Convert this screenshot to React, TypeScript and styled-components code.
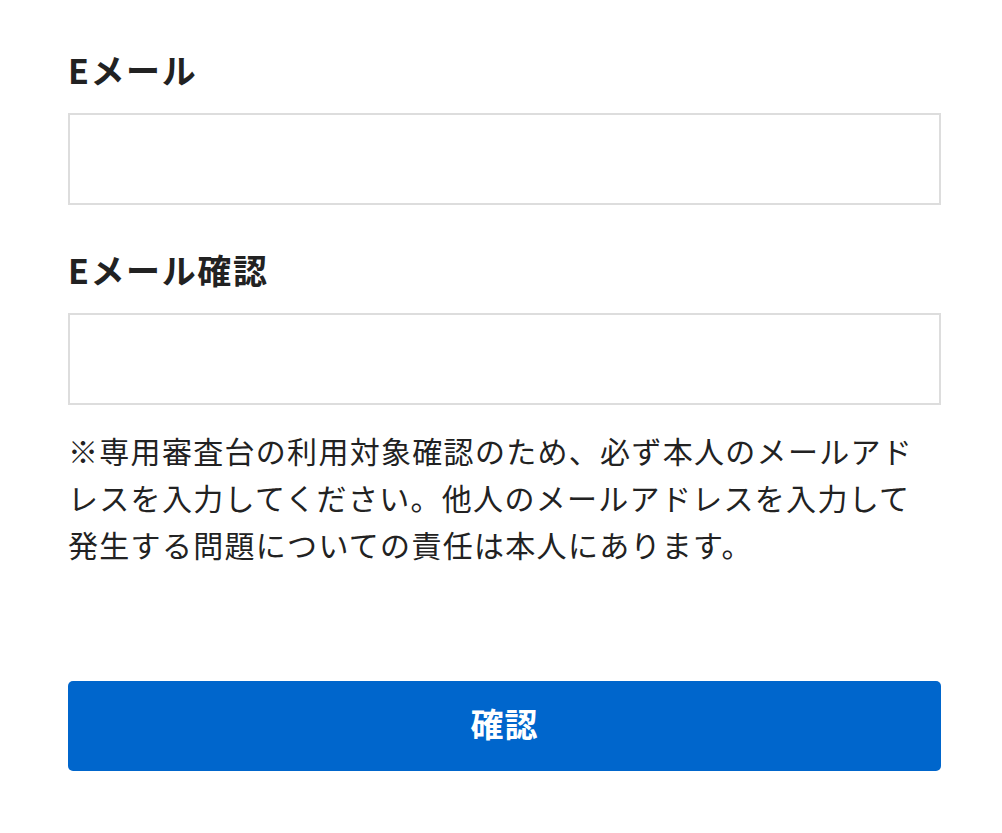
import React, { useState } from 'react';
import styled, { createGlobalStyle } from 'styled-components';

const GlobalStyle = createGlobalStyle`
  html, body {
    margin: 0;
    padding: 0;
    background: #ffffff;
  }
  body {
    font-family: "Noto Sans CJK JP", "Noto Sans", sans-serif;
    color: #222222;
  }
`;

const Form = styled.form`
  width: 873px;
  margin-left: 68px;
  padding-top: 46px;
  display: flex;
  flex-direction: column;
`;

const Field = styled.div<{ $gap?: number }>`
  display: flex;
  flex-direction: column;
  margin-bottom: ${p => p.$gap ?? 0}px;
`;

const Label = styled.label`
  font-size: 34px;
  font-weight: 700;
  line-height: 48px;
  letter-spacing: 1.6px;
  color: #222222;
  margin-bottom: 19px;
`;

const Input = styled.input`
  box-sizing: border-box;
  width: 100%;
  height: 92px;
  border: 2px solid #dddddd;
  border-radius: 0;
  padding: 0 20px;
  font-size: 28px;
  font-family: inherit;
  outline: none;
  background: #ffffff;
`;

const Note = styled.p`
  margin: 22px 0 0;
  font-size: 30px;
  line-height: 47px;
  letter-spacing: 1.3px;
  color: #222222;
`;

const SubmitButton = styled.button`
  margin-top: 113px;
  height: 90px;
  width: 100%;
  padding: 0 0 6px;
  border: none;
  border-radius: 5px;
  background: #0066cc;
  color: #ffffff;
  font-family: inherit;
  font-size: 33px;
  font-weight: 700;
  letter-spacing: 1px;
  cursor: pointer;
`;

const App = () => {
  const [email, setEmail] = useState('');
  const [confirmEmail, setConfirmEmail] = useState('');

  return (
    <>
      <GlobalStyle />
      <Form onSubmit={e => e.preventDefault()}>
        <Field $gap={41}>
          <Label htmlFor="email">Eメール</Label>
          <Input id="email" type="email" value={email} onChange={e => setEmail(e.target.value)} />
        </Field>
        <Field>
          <Label htmlFor="email-confirm">Eメール確認</Label>
          <Input id="email-confirm" type="email" value={confirmEmail} onChange={e => setConfirmEmail(e.target.value)} />
        </Field>
        <Note>
          ※専用審査台の利用対象確認のため、必ず本人のメールアドレスを入力してください。他人のメールアドレスを入力して発生する問題についての責任は本人にあります。
        </Note>
        <SubmitButton type="submit">確認</SubmitButton>
      </Form>
    </>
  );
};

export default App;
